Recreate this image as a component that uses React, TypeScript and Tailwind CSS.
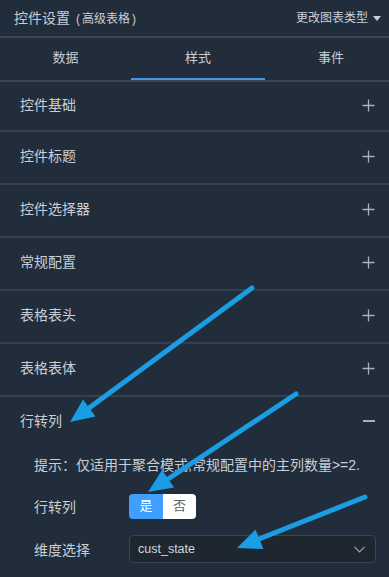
import React from "react";

const font = { fontFamily: '"Liberation Sans", "Noto Sans CJK SC", sans-serif' };

function Plus() {
  return (
    <svg width="13" height="13" viewBox="0 0 13 13" className="text-[#a9b1bc]">
      <path d="M6.5 0.5v12M0.5 6.5h12" stroke="currentColor" strokeWidth="1.3" fill="none" />
    </svg>
  );
}

function Section({ label, h }: { label: string; h: string }) {
  return (
    <div className={`flex items-center justify-between pl-5 pr-[14px] pb-[2px] border-b-2 border-[#344051] ${h}`}>
      <span className="text-[14px] text-[#c9ced6]">{label}</span>
      <Plus />
    </div>
  );
}

export default function App() {
  return (
    <div className="relative w-[389px] h-[577px] overflow-hidden bg-[#222d3c]" style={font}>
      {/* header */}
      <div className="h-[38px] flex items-center justify-between pl-[14px] pr-[8px] border-b-2 border-[#3a4657]">
        <div className="flex items-baseline text-[#c9ced6]">
          <span className="text-[14px]">控件设置</span>
          <span className="text-[12px] ml-[6px]">(</span>
          <span className="text-[12px] mx-[2px]">高级表格</span>
          <span className="text-[12px]">)</span>
        </div>
        <div className="flex items-center gap-[5px] text-[12px] text-[#c9ced6]">
          <span>更改图表类型</span>
          <svg width="8" height="5" viewBox="0 0 8 5"><path d="M0 0h8L4 5z" fill="#c9ced6" /></svg>
        </div>
      </div>
      {/* tabs */}
      <div className="grid grid-cols-[131px_134px_1fr] h-[44px] border-b-2 border-[#3a4657]">
        <div className="flex items-center justify-center text-[13px] text-[#c9ced6] pb-[2px]">数据</div>
        <div className="flex items-center justify-center text-[13px] text-[#c9ced6] border-b-2 border-[#4a94e6]">样式</div>
        <div className="flex items-center justify-center text-[13px] text-[#c9ced6] pb-[2px] pl-[8px]">事件</div>
      </div>
      <Section label="控件基础" h="h-[50px]" />
      <Section label="控件标题" h="h-[53px]" />
      <Section label="控件选择器" h="h-[53px]" />
      <Section label="常规配置" h="h-[53px]" />
      <Section label="表格表头" h="h-[53px]" />
      <Section label="表格表体" h="h-[53px]" />
      {/* expanded */}
      <div className="flex items-center justify-between pl-5 pr-[14px] h-[48px]">
        <span className="text-[14px] text-[#c9ced6]">行转列</span>
        <div className="w-[12px] h-[1.5px] bg-[#a9b1bc]" />
      </div>
      <div className="pl-[34px] pr-[13px]">
        <div className="text-[14px] text-[#c9ced6] h-[24px] flex items-center mt-[8px]">提示：仅适用于聚合模式,常规配置中的主列数量&gt;=2.</div>
        <div className="flex items-center mt-[16px] h-[26px]">
          <span className="w-[95px] text-[14px] text-[#c9ced6] pt-[2px]">行转列</span>
          <div className="flex h-[25px] rounded-[4px] overflow-hidden text-[13px]">
            <div className="w-[34px] bg-[#409eff] text-white flex items-center justify-center">是</div>
            <div className="w-[33px] bg-white text-[#606266] flex items-center justify-center">否</div>
          </div>
        </div>
        <div className="flex items-center mt-[16px]">
          <span className="w-[95px] text-[14px] text-[#c9ced6] pt-[2px]">维度选择</span>
          <div className="flex-1 h-[28px] rounded-[4px] border border-[#3a4452] bg-[#1e2730] flex items-center justify-between pl-[8px] pr-[10px]">
            <span className="text-[12.5px] text-[#d2d6dc]">cust_state</span>
            <svg width="11" height="7" viewBox="0 0 11 7"><path d="M0.5 0.8L5.5 5.8L10.5 0.8" stroke="#9aa2ad" strokeWidth="1.2" fill="none" /></svg>
          </div>
        </div>
      </div>
      {/* annotation arrows */}
      <svg className="absolute inset-0 pointer-events-none" width="389" height="577" viewBox="0 0 389 577">
        <g stroke="#1a9de2" strokeWidth="5" strokeLinecap="round" fill="#1a9de2">
          <line x1="252" y1="288" x2="89" y2="408" />
          <line x1="296" y1="394" x2="168" y2="479" />
          <line x1="365" y1="497" x2="259" y2="539" />
        </g>
        <g fill="#1a9de2">
          <polygon points="70,422 95.5,416.5 83,399.5" />
          <polygon points="148,492 174,487.5 162,470" />
          <polygon points="237,548 263.5,549 255.5,529.5" />
        </g>
      </svg>
    </div>
  );
}
